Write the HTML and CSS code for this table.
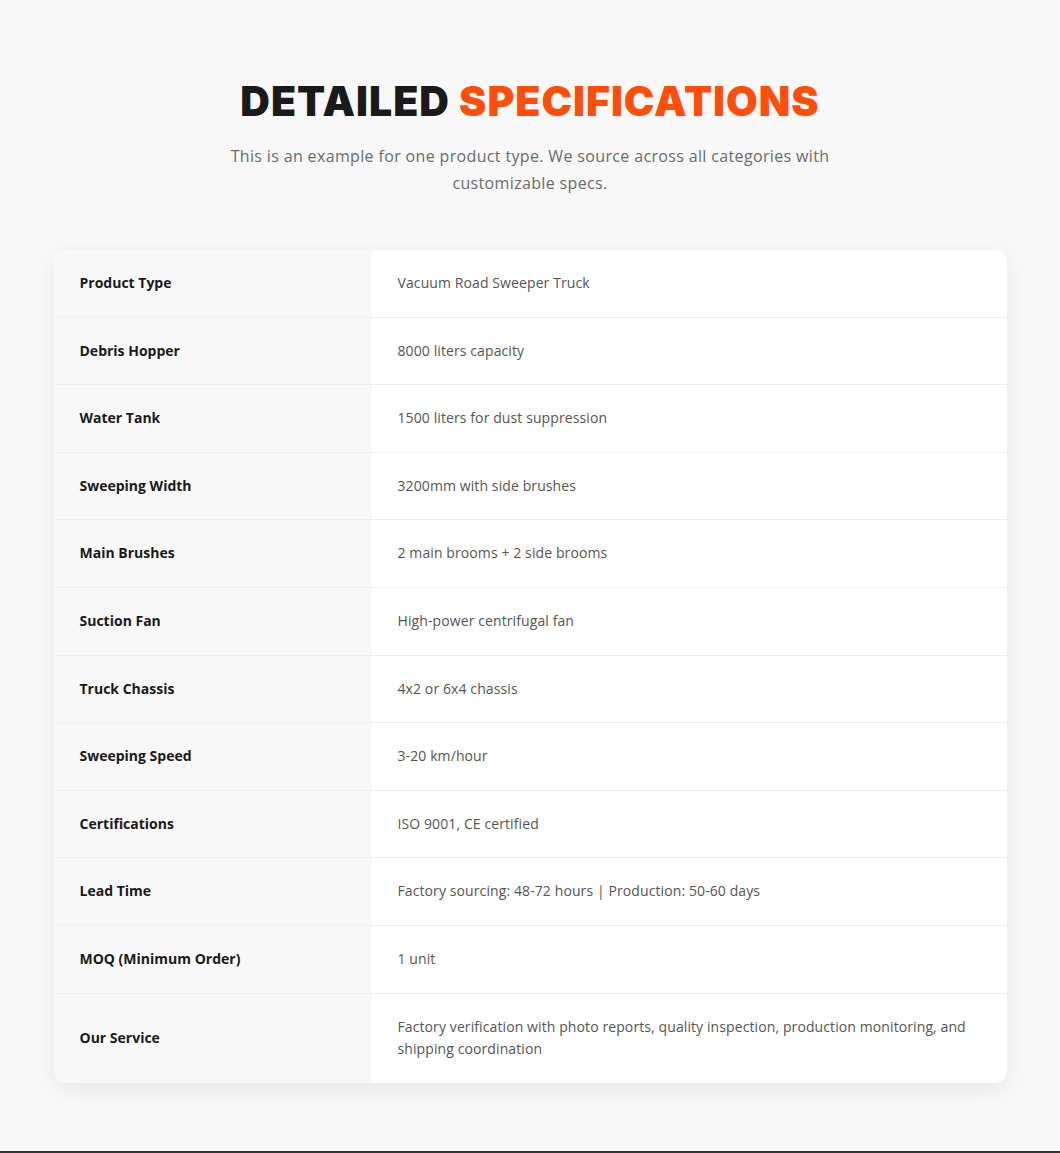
FILE: index.html
```html
<!DOCTYPE html>
<html lang="en">
<head>
<meta charset="utf-8">
<title>Detailed Specifications</title>
<link rel="stylesheet" href="styles.css">
</head>
<body>
<section class="specs">
  <header class="specs-head">
    <h2 class="specs-title">DETAILED <span class="accent">SPECIFICATIONS</span></h2>
    <p class="specs-sub">This is an example for one product type. We source across all categories with customizable specs.</p>
  </header>
  <div class="spec-card">
    <div class="spec-row"><div class="spec-label">Product Type</div><div class="spec-value">Vacuum Road Sweeper Truck</div></div>
    <div class="spec-row"><div class="spec-label">Debris Hopper</div><div class="spec-value">8000 liters capacity</div></div>
    <div class="spec-row"><div class="spec-label">Water Tank</div><div class="spec-value">1500 liters for dust suppression</div></div>
    <div class="spec-row"><div class="spec-label">Sweeping Width</div><div class="spec-value">3200mm with side brushes</div></div>
    <div class="spec-row"><div class="spec-label">Main Brushes</div><div class="spec-value">2 main brooms + 2 side brooms</div></div>
    <div class="spec-row"><div class="spec-label">Suction Fan</div><div class="spec-value">High-power centrifugal fan</div></div>
    <div class="spec-row"><div class="spec-label">Truck Chassis</div><div class="spec-value">4x2 or 6x4 chassis</div></div>
    <div class="spec-row"><div class="spec-label">Sweeping Speed</div><div class="spec-value">3-20 km/hour</div></div>
    <div class="spec-row"><div class="spec-label">Certifications</div><div class="spec-value">ISO 9001, CE certified</div></div>
    <div class="spec-row"><div class="spec-label">Lead Time</div><div class="spec-value">Factory sourcing: 48-72 hours | Production: 50-60 days</div></div>
    <div class="spec-row"><div class="spec-label">MOQ (Minimum Order)</div><div class="spec-value">1 unit</div></div>
    <div class="spec-row"><div class="spec-label">Our Service</div><div class="spec-value">Factory verification with photo reports, quality inspection, production monitoring, and shipping coordination</div></div>
  </div>
</section>
<div class="bottom-bar"></div>
</body>
</html>
```

FILE: styles.css
```css
html, body {
  margin: 0;
  padding: 0;
}
body {
  background: #f8f8f8;
  font-family: "Open Sans", "Liberation Sans", sans-serif;
  color: #1a1a1a;
  min-height: 1153px;
  position: relative;
}
.specs {
  padding: 78px 0 70px;
  display: flex;
  flex-direction: column;
  align-items: center;
}
.specs-head {
  text-align: center;
}
.specs-title {
  margin: 0;
  font-family: "Inter", "DejaVu Sans", sans-serif;
  font-weight: 900;
  font-size: 41px;
  line-height: 46px;
  letter-spacing: 1px;
  color: #1a1a1a;
}
.accent {
  color: #ff4d0a;
}
.specs-sub {
  margin: 19px auto 0;
  max-width: 640px;
  font-size: 16px;
  line-height: 27px;
  letter-spacing: 0.35px;
  color: #6b6b6b;
}
.spec-card {
  margin-top: 53px;
  width: 953px;
  background: #fff;
  border-radius: 12px;
  overflow: hidden;
  box-shadow: 0 6px 24px rgba(0, 0, 0, 0.07);
}
.spec-row {
  display: grid;
  grid-template-columns: 318px 1fr;
  border-bottom: 1px solid #eeeeee;
}
.spec-row:last-child {
  border-bottom: none;
}
.spec-label {
  background: #f8f8f8;
  padding: 22.1px 26px;
  font-size: 14px;
  line-height: 22.4px;
  font-weight: 700;
  color: #1a1a1a;
  display: flex;
  align-items: center;
}
.spec-value {
  padding: 22.1px 26px;
  font-size: 14px;
  line-height: 22.4px;
  letter-spacing: 0.1px;
  color: #555;
}
.bottom-bar {
  position: absolute;
  left: 0;
  right: 0;
  bottom: 0;
  height: 2px;
  background: #333;
}
```
